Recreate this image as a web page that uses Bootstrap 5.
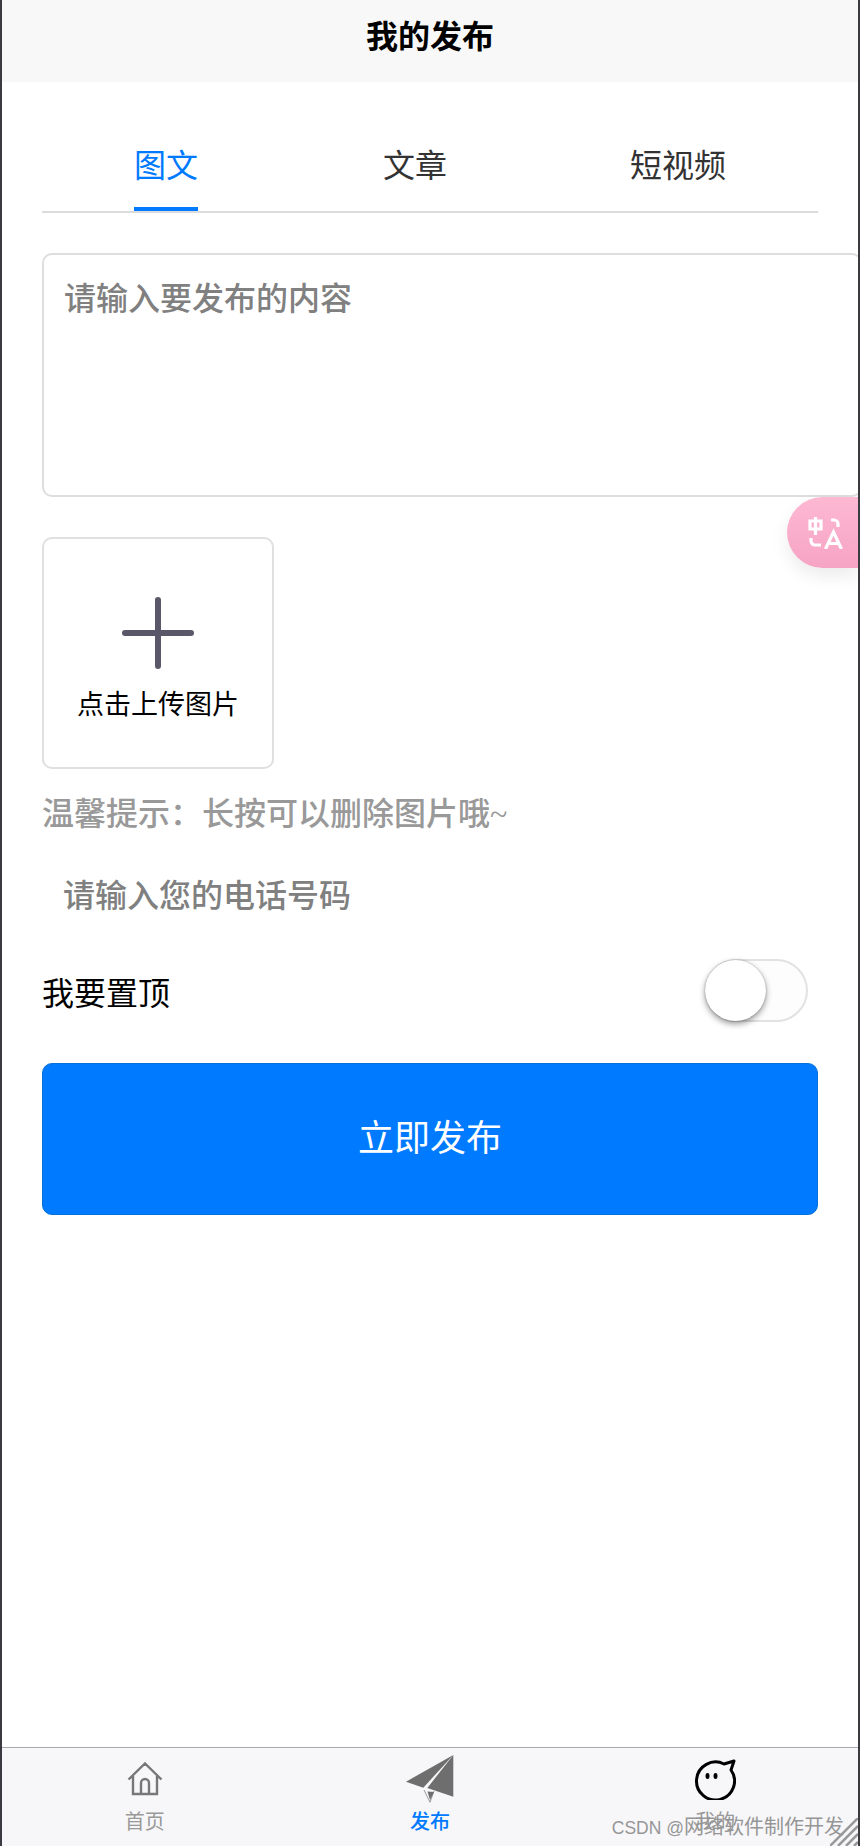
<!DOCTYPE html>
<html lang="zh"><head><meta charset="utf-8">
<link rel="stylesheet" href="https://cdn.jsdelivr.net/npm/bootstrap@5.3.0/dist/css/bootstrap.min.css">
<style>
html,body{height:100%}
body{font-family:"Liberation Serif","Noto Sans CJK SC",serif;background:#fff;color:#000}
.phone-frame{height:1846px;border-left:2px solid #3a3a40;border-right:2px solid #3a3a40;overflow:hidden;position:relative}
.top-title{height:82px;background:#f8f8f8;font-size:32px;font-weight:700;line-height:74px;text-align:center}
.form-area{padding:0 40px;flex:1 1 auto;min-height:0}
.tab-strip{height:131px;border-bottom:2px solid #dcdcde}
.tab-item{font-size:32px;color:#333;line-height:1;padding-top:68px;height:129px}
.tab-item.on{color:#007aff;border-bottom:4px solid #007aff}
.tab-one{width:64px;margin-left:92px}
.tab-two{width:64px;margin-left:185px}
.tab-three{width:96px;margin-left:183px}
.text-box{height:244px;width:820px;margin-top:40px;border:2px solid #dedede;border-radius:10px;padding:23px 20px;font-size:32px;color:#808080;line-height:42px;font-weight:500}
.upload-box{width:232px;height:232px;margin-top:40px;border:2px solid #e0e0e0;border-radius:10px}
.plus-icon{width:74px;height:74px;display:block;margin-top:57px}
.upload-label{font-size:27px;line-height:36px;margin-top:17px}
.hint-line{font-size:32px;line-height:42px;color:#999;margin-top:24px;font-weight:500}
.phone-line{font-size:32px;line-height:42px;color:#808080;margin-top:40px;padding-left:21px;font-weight:500}
.pin-row{margin-top:42px;padding-right:10px}
.pin-label{font-size:32px;line-height:42px;margin-top:14px}
.toggle-track{width:103px;height:63px;border:2px solid #e2e2e2;border-radius:32px;background:#fdfdfd;position:relative}
.toggle-knob{position:absolute;left:-2px;top:-1px;width:61px;height:61px;border-radius:50%;background:#fff;box-shadow:0 3px 6px rgba(0,0,0,.4),0 0 2px rgba(0,0,0,.3)}
.send-btn{display:block;width:100%;height:152px;margin-top:41px;background:#007aff;border:1px solid #0a6fd8;border-radius:10px;color:#fff;font-size:36px}
.send-btn:hover{background:#007aff;color:#fff}
.tab-foot{height:99px;background:#f7f7fa;border-top:1px solid #a8a8ac;position:relative;flex:0 0 auto}
.foot-item{width:33.333%;font-size:20px;line-height:24px;color:#999;height:100%}
.foot-item.on{color:#007aff;font-weight:500}
.foot-icon{height:62px}
.float-pill{position:absolute;right:0;top:497px;width:71px;height:71px;border-radius:36px 0 0 36px;background:linear-gradient(180deg,#fdb8d2,#f6a4c4);box-shadow:0 8px 18px rgba(0,0,0,.08);padding-left:6px}
.mark-text{position:absolute;right:14px;bottom:4px;font-family:"Liberation Sans","Noto Sans CJK SC",sans-serif;font-size:20px;line-height:28px;color:#969696;white-space:nowrap}
.mark-latin{font-size:17.500px}
.corner-hatch{position:absolute;right:0;bottom:0;width:28px;height:28px}
</style></head><body>
<div class="phone-frame d-flex flex-column">
<div class="top-title flex-shrink-0">我的发布</div>
<div class="form-area">
<div class="tab-strip d-flex">
<div class="tab-item on tab-one">图文</div>
<div class="tab-item tab-two">文章</div>
<div class="tab-item tab-three">短视频</div>
</div>
<div class="text-box">请输入要发布的内容</div>
<div class="upload-box d-flex flex-column align-items-center">
<svg class="plus-icon" viewBox="0 0 74 74"><path d="M37 4v66M4 37h66" stroke="#5a5868" stroke-width="6" stroke-linecap="round" fill="none"/></svg>
<div class="upload-label">点击上传图片</div>
</div>
<div class="hint-line">温馨提示：长按可以删除图片哦~</div>
<div class="phone-line">请输入您的电话号码</div>
<div class="pin-row d-flex justify-content-between align-items-start">
<div class="pin-label">我要置顶</div>
<div class="toggle-track"><div class="toggle-knob"></div></div>
</div>
<button class="btn send-btn" type="button">立即发布</button>
</div>
<div class="tab-foot d-flex">
<div class="foot-item d-flex flex-column align-items-center">
<div class="foot-icon d-flex align-items-center"><svg width="36" height="34" viewBox="0 0 36 34"><path d="M1.500 17.500L18 1.500l16.500 16M6 14v18h24V14M14 32V21a4 4 0 0 1 8 0v11" fill="none" stroke="#777" stroke-width="2.400"/></svg></div>
<div>首页</div>
</div>
<div class="foot-item on d-flex flex-column align-items-center">
<div class="foot-icon d-flex align-items-center"><svg width="48" height="48" viewBox="0 0 48 48"><path d="M47.300 0L0 26.700l17.300 6z" fill="#6e6e6e"/><path d="M47.300 0v41.700L27.300 35l-6-2z" fill="#6e6e6e"/><path d="M18 35l6 12.300L28 36" fill="none" stroke="#999" stroke-width="1"/><path d="M21.500 36.500L24 45l4-8z" fill="#6e6e6e"/></svg></div>
<div>发布</div>
</div>
<div class="foot-item d-flex flex-column align-items-center">
<div class="foot-icon d-flex align-items-center"><svg width="42" height="42" viewBox="0 0 42 42"><path d="M30 6l10-3-3 9A19 19 0 1 1 30 6z" fill="none" stroke="#000" stroke-width="3" stroke-linejoin="round"/><ellipse cx="13.500" cy="18" rx="2" ry="3"/><ellipse cx="21.500" cy="18" rx="2" ry="3"/></svg></div>
<div>我的</div>
</div>
</div>
<div class="float-pill d-flex align-items-center justify-content-center">
<svg width="35" height="32" viewBox="0 0 35 32"><g fill="none" stroke="#fff" stroke-width="3.200"><path d="M2 4h11v8H2zM7.500 0v18"/><path d="M23 3h3a4 4 0 0 1 4 4v3"/><path d="M3 21v3a4 4 0 0 0 4 4h6"/><path d="M17.500 32L25.500 15l8 17M20 26.500h11"/></g></svg>
</div>
<div class="mark-text"><span class="mark-latin">CSDN @</span>网络软件制作开发</div>
<svg class="corner-hatch" viewBox="0 0 28 28"><path d="M0 28L28 0M8 28L28 8M16 28L28 16M24 28l4-4" stroke="#999" stroke-width="2.500"/></svg>
</div>
</body></html>
